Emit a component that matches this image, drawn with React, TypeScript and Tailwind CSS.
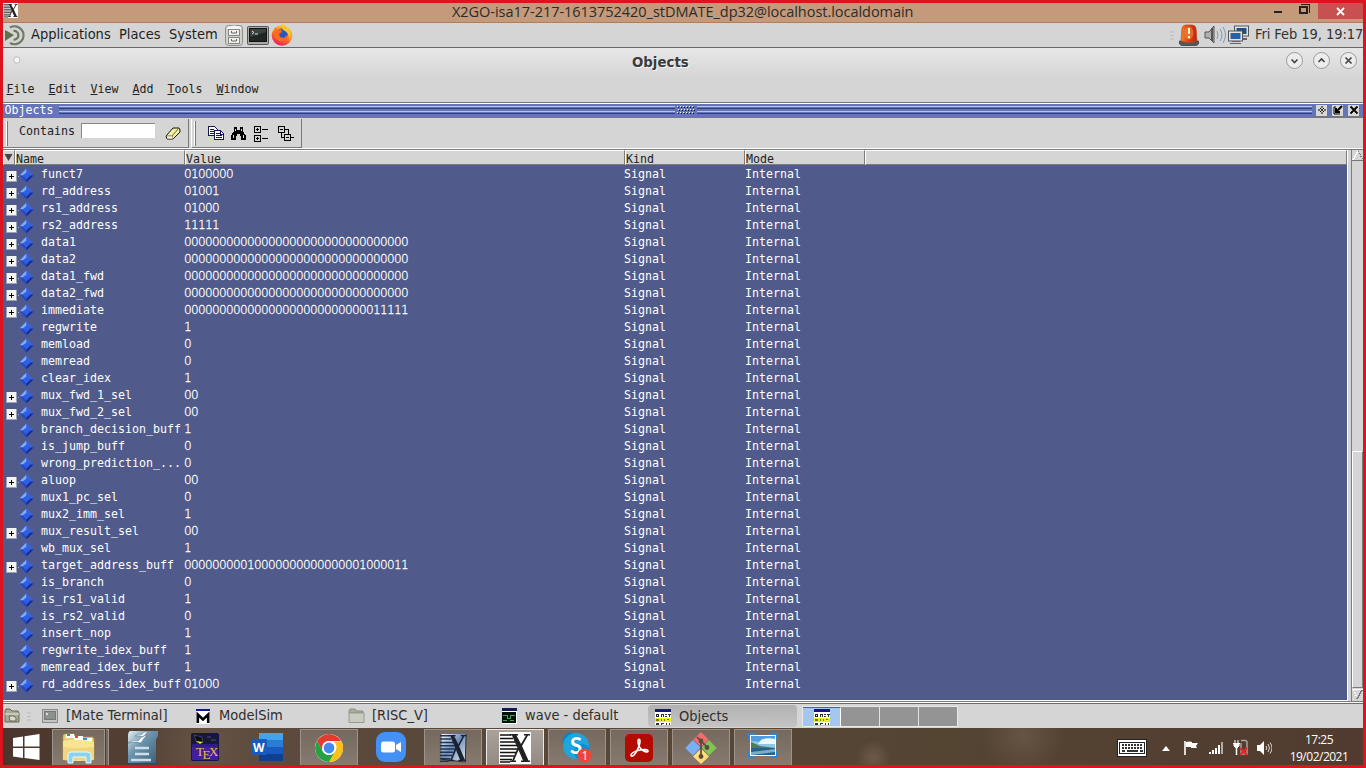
import type { ReactNode } from "react";

const mono = "font-['DejaVu_Sans_Mono','Liberation_Mono',monospace] text-[11.63px] leading-[17px] whitespace-pre";
const ui = "font-['DejaVu_Sans_Condensed','DejaVu_Sans',sans-serif] text-[14.5px] whitespace-pre";

type Signal = { name: string; value: string; group?: boolean };

const zero32 = "00000000000000000000000000000000";
const signals: Signal[] = [
  { name: "funct7", value: "0100000", group: true },
  { name: "rd_address", value: "01001", group: true },
  { name: "rs1_address", value: "01000", group: true },
  { name: "rs2_address", value: "11111", group: true },
  { name: "data1", value: zero32, group: true },
  { name: "data2", value: zero32, group: true },
  { name: "data1_fwd", value: zero32, group: true },
  { name: "data2_fwd", value: zero32, group: true },
  { name: "immediate", value: "00000000000000000000000000011111", group: true },
  { name: "regwrite", value: "1" },
  { name: "memload", value: "0" },
  { name: "memread", value: "0" },
  { name: "clear_idex", value: "1" },
  { name: "mux_fwd_1_sel", value: "00", group: true },
  { name: "mux_fwd_2_sel", value: "00", group: true },
  { name: "branch_decision_buff", value: "1" },
  { name: "is_jump_buff", value: "0" },
  { name: "wrong_prediction_...", value: "0" },
  { name: "aluop", value: "00", group: true },
  { name: "mux1_pc_sel", value: "0" },
  { name: "mux2_imm_sel", value: "1" },
  { name: "mux_result_sel", value: "00", group: true },
  { name: "wb_mux_sel", value: "1" },
  { name: "target_address_buff", value: "00000000010000000000000001000011", group: true },
  { name: "is_branch", value: "0" },
  { name: "is_rs1_valid", value: "1" },
  { name: "is_rs2_valid", value: "0" },
  { name: "insert_nop", value: "1" },
  { name: "regwrite_idex_buff", value: "1" },
  { name: "memread_idex_buff", value: "1" },
  { name: "rd_address_idex_buff", value: "01000", group: true },
];

function XLogo({ w, h, glossy = false }: { w: number; h: number; glossy?: boolean }) {
  return (
    <svg width={w} height={h} viewBox="0 0 32 32" preserveAspectRatio="none">
      <defs>
        <linearGradient id="xg" x1="0" y1="0" x2="1" y2="1">
          <stop offset="0" stopColor="#ffffff" />
          <stop offset="0.45" stopColor="#6d8dbb" />
          <stop offset="1" stopColor="#e6edf5" />
        </linearGradient>
      </defs>
      <path d={glossy ? "M3 1h28l-1 30-27-3z" : "M0 0h32v32H0z"} fill={glossy ? "url(#xg)" : "#fff"} />
      <path
        d="M1 3h11M1 6.500h13M1 10h15M1 13.500h17M1 17h18M1 20.500h16M1 24h14M1 27.500h12M1 30h10"
        stroke={glossy ? "#1f3454" : "#111"}
        strokeWidth="1.600"
      />
      <path d="M11 2h8v1.500h-1.500L22 12l5-8.500h-2V2h6v1.500h-2L23 14l6.500 14.500H31V30h-9v-1.500h2L19.500 18 15 28.500h2V30h-6v-1.500h2L18.500 16 13 3.500h-2z" fill={glossy ? "#1b2230" : "#222"} />
      {glossy && <path d="M3 28l27 3 1-30" fill="none" stroke="#222" />}
    </svg>
  );
}

function Diamond() {
  return (
    <svg width="15" height="15" viewBox="0 0 15 15" className="shrink-0">
      <path d="M7.500.5l7 7-7 7-7-7z" fill="#2f5fe8" />
      <path d="M7.500.5l-7 7h3l4-3z" fill="#82acf4" />
      <path d="M7.500.5l7 7h-3l-4-3z" fill="#3a63d8" />
      <path d="M.5 7.500l7 7v-3l-4-4z" fill="#2b49b8" />
      <path d="M14.500 7.500l-7 7v-3l4-4z" fill="#1a2c8a" />
    </svg>
  );
}

function Plus() {
  return (
    <svg width="11" height="11" viewBox="0 0 11 11" shapeRendering="crispEdges" className="shrink-0">
      <path d="M0 0h11v11H0z" fill="#9aa3bb" />
      <path d="M1 0h9v10H1z" fill="#f4f4f0" />
      <path d="M3 5h5v1H3zM5 3h1v5H5z" fill="#000" />
    </svg>
  );
}

function FirefoxIcon() {
  return (
    <svg width="22" height="22" viewBox="0 0 22 22">
      <defs>
        <linearGradient id="ff" x1="0.8" y1="0" x2="0.3" y2="1">
          <stop offset="0" stopColor="#ffd73a" />
          <stop offset="0.45" stopColor="#ff8a16" />
          <stop offset="1" stopColor="#e81a63" />
        </linearGradient>
      </defs>
      <circle cx="11" cy="11.500" r="10.300" fill="url(#ff)" />
      <circle cx="11" cy="10" r="5.800" fill="#2458c4" />
      <path d="M4 3l2 3 4-1 1 3-3 2 1 3 4 1 3-3c0 5-4 7-7 6-5-1-7-6-5-11z" fill="#ff6a1c" />
      <path d="M10 0c4 0 4 3 7 5 4 5 3 9 1 12 1-5-1-8-4-10-3-1-4-4-4-7z" fill="#ffc62b" />
    </svg>
  );
}

function ObjectsIcon() {
  return (
    <svg width="16" height="16" viewBox="0 0 16 16" shapeRendering="crispEdges">
      <path d="M0 0h16v16H0z" fill="#fff" />
      <path d="M0 0h16v3H0z" fill="#14148a" />
      <path d="M1 5h3v3H1z" fill="#222" />
      <path d="M2 6h1v1H2z" fill="#fff" />
      <path d="M6 5h1v3H6zM7 5h1v1H7zM8 5h1v3H8zM10 5h2v1h-2zM10 7h2v1h-2zM13 5h3v1h-3zM14 6h1v2h-1z" fill="#333" />
      <path d="M0 9h16v4H0z" fill="#ecec22" />
      <path d="M1 10h3v2H1zM6 10h1v2H6zM9 10h1v2H9zM12 10h2v1h-2z" fill="#777716" />
      <path d="M1 14h3v2H1zM6 14h1v2H6zM7 14h2v1H7zM11 14h1v2h-1zM14 14h1v2h-1z" fill="#333" />
    </svg>
  );
}

function FolderSmall() {
  return (
    <svg width="17" height="16" viewBox="0 0 17 16">
      <path d="M1 3l1-2h5l1 2h7v2H1z" fill="#a8ad9c" stroke="#8b8f80" />
      <path d="M1 5h15v9.500H1z" fill="#c9ccc0" stroke="#989c8c" />
    </svg>
  );
}

function TitleBar() {
  return (
    <div className="flex h-5 shrink-0 border-b border-[#ad7f60] bg-[#c49a7a]">
      <div className="h-4 w-[15px]"><XLogo w={15} h={15} /></div>
      <div className="h-[19px] w-[1180px] pl-[434px] font-['Open_Sans','Noto_Sans',sans-serif] text-[14.5px] leading-[18px] tracking-[-0.035px] whitespace-pre text-[#2b2b2b]">
        X2GO-isa17-217-1613752420_stDMATE_dp32@localhost.localdomain
      </div>
      <div className="ml-auto flex h-4">
        <svg width="55" height="16" viewBox="0 0 55 16" shapeRendering="crispEdges">
          <path d="M11 8h8v2h-8z" fill="#222" />
          <path d="M37 4h7v6h-7z" fill="none" stroke="#222" strokeWidth="2" />
          <path d="M38 1.500h8.500v8" fill="none" stroke="#222" />
        </svg>
        <div className="flex w-[45px] items-center justify-center bg-[#c75050]">
          <svg width="9" height="9" viewBox="0 0 9 9"><path d="M1 1l7 7M8 1L1 8" stroke="#fff" strokeWidth="1.800" /></svg>
        </div>
      </div>
    </div>
  );
}

function MatePanel() {
  return (
    <div className={`flex h-[25px] shrink-0 items-center border-b border-[#68686a] bg-[#d5d5d5] text-[#1e1e1e] ${ui}`}>
      <svg width="24" height="24" viewBox="0 0 24 24">
        <path d="M2 7l9 5-9 6z" fill="#5d7248" />
        <path d="M10.500 8a4.300 4.300 0 1 1 0 8.500" fill="none" stroke="#68775c" strokeWidth="2.200" />
        <path d="M7 4.500a9 9 0 1 1 0 15.500" fill="none" stroke="#6f7b67" strokeWidth="2.200" />
      </svg>
      <span className="ml-1 w-[88px]">Applications</span>
      <span className="w-[50px]">Places</span>
      <span className="w-[56px]">System</span>
      <svg width="18" height="22" viewBox="0 0 18 22">
        <rect x=".5" y="1.500" width="17" height="20" rx="3" fill="#d0d0cd" stroke="#8e8e8b" />
        <path d="M2 3q7-3 14 0v2H2z" fill="#f5f5f3" />
        <rect x="3.500" y="5.500" width="11" height="6" fill="#efefec" stroke="#868683" />
        <rect x="3.500" y="13.500" width="11" height="6" fill="#efefec" stroke="#868683" />
        <path d="M6.500 7v2h5V7M6.500 15v2h5v-2" fill="none" stroke="#666" />
      </svg>
      <svg width="22" height="19" viewBox="0 0 22 19" className="ml-1">
        <rect x=".5" y=".5" width="21" height="18" rx="1" fill="#a9aaa5" stroke="#555" />
        <rect x="2.500" y="2.500" width="17" height="13" fill="#1f2624" stroke="#111" />
        <path d="M3 11L19 6V3H3z" fill="#3b4340" />
        <path d="M5 5l2 1.500L5 8M8 8h3" stroke="#ddd" fill="none" />
      </svg>
      <div className="ml-[2px]"><FirefoxIcon /></div>
      <div className="ml-auto flex items-center">
        <svg width="4" height="9" viewBox="0 0 4 9"><path d="M0 1h4M0 4.500h4M0 8h4" stroke="#bbb" /></svg>
        <svg width="22" height="22" viewBox="0 0 22 22" className="ml-[4px]">
          <defs><linearGradient id="al" x1="0" x2="1"><stop offset="0" stopColor="#f0862f" /><stop offset=".45" stopColor="#e2421a" /><stop offset="1" stopColor="#b9260d" /></linearGradient></defs>
          <path d="M1.500 17h19v3l-2 1.500h-15l-2-1.500z" fill="#55565a" stroke="#333" strokeWidth=".7" />
          <path d="M3 17L4 4q1-3 4-3h6q3 0 4 3l1 13q-8 3-16 0z" fill="url(#al)" stroke="#c14a17" strokeWidth=".7" />
          <ellipse cx="11" cy="9" rx="4.500" ry="6.500" fill="#f08a3a" opacity=".6" />
          <path d="M11 4v6M11 12v2.300" stroke="#fff3d0" strokeWidth="2" />
        </svg>
        <svg width="22" height="22" viewBox="0 0 22 22" className="ml-1">
          <path d="M1 8h4l5-6v17l-5-5H1z" fill="#aeb2ac" stroke="#555" />
          <path d="M8 4v13" stroke="#555" strokeWidth="2" />
          <path d="M13 7q2 4 0 8M16 5q4 6 0 12M19 3q5 8 0 16" fill="none" stroke="#8097bd" />
        </svg>
        <svg width="23" height="20" viewBox="0 0 23 20" className="ml-px">
          <rect x="7.500" y="1" width="14" height="10" fill="#e4e4df" stroke="#555" />
          <rect x="9.500" y="3" width="10" height="6" fill="#1f4e8d" />
          <path d="M12 14h8" stroke="#666" strokeWidth="2" />
          <rect x="1.500" y="6" width="14" height="10" fill="#e4e4df" stroke="#555" />
          <rect x="3.500" y="8" width="10" height="6" fill="#2a62a8" />
          <path d="M5 16.500h8M3 18.500h11" stroke="#666" />
        </svg>
        <span className="ml-[5px] w-[108px] tracking-[-0.06px] text-[#333]">Fri Feb 19, 19:17</span>
      </div>
    </div>
  );
}

function RoundButton({ children }: { children: ReactNode }) {
  return (
    <svg width="19" height="19" viewBox="0 0 19 19">
      <circle cx="9.500" cy="9.500" r="8" fill="#ededed" stroke="#9a9a9a" />
      <g fill="none" stroke="#444" strokeWidth="1.700">{children}</g>
    </svg>
  );
}

function WindowTitle() {
  return (
    <div className="flex h-[30px] shrink-0 items-start bg-linear-to-b from-[#e7e7e7] to-[#d5d5d5]">
      <svg width="28" height="24" viewBox="0 0 28 24"><circle cx="13.800" cy="12" r="3.200" fill="#f7f7f7" stroke="#bdbdbd" /></svg>
      <div className="w-[1250px] pl-[601px] pt-[5px] font-['DejaVu_Sans',sans-serif] text-[13.33px] leading-5 font-bold text-[#3b3b3b] [text-shadow:1px_1px_0_#f5f5f5]">Objects</div>
      <div className="ml-auto mr-[5px] flex gap-2 pt-[3px]">
        <RoundButton><path d="M6.500 8.500l3 3 3-3" /></RoundButton>
        <RoundButton><path d="M6.500 11l3-3 3 3" /></RoundButton>
        <RoundButton><path d="M6.500 6.500l6 6M12.500 6.500l-6 6" /></RoundButton>
      </div>
    </div>
  );
}

function Menu() {
  const items: [string, string][] = [["File", "w-[42px]"], ["Edit", "w-[42px]"], ["View", "w-[42px]"], ["Add", "w-[35px]"], ["Tools", "w-[49px]"], ["Window", "w-[49px]"]];
  return (
    <div className={`flex h-6 shrink-0 bg-[#d5d5d5] pt-[3px] pl-[3.5px] text-[#222] ${mono}`}>
      {items.map(([label, w]) => (
        <span key={label} className={w}><span className="underline underline-offset-1">{label[0]}</span>{label.slice(1)}</span>
      ))}
    </div>
  );
}

function Grip() {
  return (
    <div className="flex h-2 flex-1 flex-col">
      <div className="h-px bg-[#b6c0f0]" /><div className="h-px bg-[#6475b8]" /><div className="h-px bg-[#333e70]" />
      <div className="h-[2px]" />
      <div className="h-px bg-[#b6c0f0]" /><div className="h-px bg-[#6475b8]" /><div className="h-px bg-[#333e70]" />
    </div>
  );
}

function DockButton({ children }: { children: ReactNode }) {
  return (
    <div className="flex h-3 w-3 items-center justify-center border-r border-b border-[#777] bg-[#d8d8d8]">
      <svg width="10" height="10" viewBox="0 0 10 10" stroke="#000" fill="none">{children}</svg>
    </div>
  );
}

function DockBar() {
  return (
    <div className="flex h-4 shrink-0 items-center border-t border-b border-t-[#777] border-b-[#777] bg-[#6475b8] shadow-[inset_0_1px_0_#fff]">
      <span className={`w-[56px] pt-px pl-[1.5px] text-white ${mono}`}>Objects</span>
      <Grip />
      <svg width="22" height="9" viewBox="0 0 22 9" shapeRendering="crispEdges">
        {[0, 1, 2, 3, 4, 5].map((i) => (
          <g key={i}>
            <path d={`M${2 + i * 3} 0h1v1h-1zM${3 + i * 3} 3h1v1h-1zM${2 + i * 3} 6h1v1h-1z`} fill="#fff" />
            <path d={`M${3 + i * 3} 1h1v1h-1zM${4 + i * 3} 4h1v1h-1zM${3 + i * 3} 7h1v1h-1z`} fill="#111" />
          </g>
        ))}
      </svg>
      <div className="flex w-[615px]"><Grip /></div>
      <div className="flex w-[51px] gap-1 pt-[1px] pl-1">
        <DockButton><path d="M5 1v2M5 4v2M5 7v2M1 5h2M4 5h2M7 5h2M3 3l1 1M6 6l1 1M7 3L6 4M4 6L3 7" /></DockButton>
        <DockButton><path d="M1 2v7h6M1 2h2" /><path d="M9 1L4 6M3 3v4h4" strokeWidth="2" /></DockButton>
        <DockButton><path d="M1.500 1.500l7 7M8.500 1.500l-7 7" strokeWidth="1.800" /></DockButton>
      </div>
    </div>
  );
}

function ToolBar() {
  return (
    <div className="flex h-[31px] shrink-0 border-b border-white bg-[#d5d5d5] pt-px">
      <div className="flex h-[29px] w-[186px] border-r border-b border-[#7b7b7b] pl-[3px]">
        <div className="mt-[2px] h-[25px] w-[2px] border-l border-l-white border-r border-r-[#777]" />
        <span className={`ml-[11px] mt-[4px] w-[62px] text-[#222] ${mono}`}>Contains</span>
        <div className="mt-[4px] h-[15px] w-[74px] border-t border-l border-[#888] bg-white" />
        <svg width="16" height="14" viewBox="0 0 16 14" className="ml-[10px] mt-[8px]">
          <path d="M1 9L8 1h6l1 2v2l-7 7H2z" fill="#f4f0a0" stroke="#111" />
          <path d="M1 9h6l7-8M7 9l1 3" fill="none" stroke="#665" />
          <path d="M2 9.500h5l1 2H2z" fill="#fffbd9" />
        </svg>
      </div>
      <div className="ml-[2px] flex h-[29px] w-[111px] border-l border-r border-b border-[#7b7b7b] border-l-white pl-[2px]">
        <div className="mt-[2px] h-[25px] w-[2px] border-l border-l-white border-r border-r-[#777]" />
        <svg width="87" height="18" viewBox="0 0 87 18" className="ml-[12px] mt-[6px]" fill="none" stroke="#000" shapeRendering="crispEdges">
          <g stroke="#17174f"><path d="M.5 1.500h6l3 3v6h-9z" fill="#fff" /><path d="M6.500 5.500h6l3 3v6h-9z" fill="#fff" /><path d="M2 4.500h4M2 6.500h4M2 8.500h4M8 8.500h4M8 10.500h6M8 12.500h6M12.500 5v4h3" /></g>
          <path d="M26 2h3v3h3V2h3v4l3 5v4h-5v-4h-1v-2h-3v2h-1v4h-5v-4l3-5z" fill="#000" stroke="none" />
          <path d="M27.500 4v2M33.500 4v2M25.500 10v3M35.500 10v3" stroke="#ddd" />
          <g strokeWidth="1"><path d="M46.500 1.500h6v6h-6zM46.500 10.500h6v6h-6zM48 4.500h3M49.500 3v3M48 13.500h3M49.500 12v3M54 4.500h6M54 13.500h6" /></g>
          <path d="M70.500 1.500h6v6h-6zM76.500 9.500h6v6h-6zM72 4.500h3M78 12.500h3M77 4.500h3v5M73.500 8v4.500h3M83 12.500h3" />
        </svg>
      </div>
    </div>
  );
}

function HeaderCell({ w, children }: { w: string; children?: ReactNode }) {
  return <div className={`h-[15px] border-t border-l border-t-white border-l-white border-r border-b border-r-[#7b7b7b] border-b-[#7b7b7b] bg-[#d5d5d5] text-[#222] ${w} ${mono} leading-[14px]`}>{children}</div>;
}

function SignalRow({ s }: { s: Signal }) {
  return (
    <div className={`flex h-[17px] text-white ${mono}`}>
      <div className="flex w-[38px] pt-[3px] pl-[3px]">
        <div className="w-[11px] pt-[3px]">{s.group && <Plus />}</div>
        <span className="mt-2 ml-px h-px w-px">{s.group && <span className="block h-px w-px bg-[#aeb6d4]" />}</span>
        <Diamond />
      </div>
      <span className="w-[143px] pt-px">{s.name}</span>
      <span className="w-[440px] pt-px font-['DejaVu_Sans_Light','DejaVu_Sans',sans-serif] text-[12px] tracking-[-0.635px] [-webkit-text-stroke:0.3px_white]">{s.value}</span>
      <span className="w-[121px] pt-px">Signal</span>
      <span className="pt-px">Internal</span>
    </div>
  );
}

function Table() {
  return (
    <div className="flex h-[552px] shrink-0 border-t border-[#7b7b7b] bg-[#d5d5d5]">
      <div className="flex w-[1345px] flex-col border-r border-b border-white bg-[#505a8b]">
        <div className="flex">
          <HeaderCell w="w-[12px]"><svg width="10" height="12" viewBox="0 0 10 12"><path d="M.5 3h8l-4 7z" fill="#444" /></svg></HeaderCell>
          <HeaderCell w="w-[170px]">Name</HeaderCell>
          <HeaderCell w="w-[440px]">Value</HeaderCell>
          <HeaderCell w="w-[120px]">Kind</HeaderCell>
          <HeaderCell w="w-[120px]">Mode</HeaderCell>
          <HeaderCell w="w-[482px]" />
        </div>
        {signals.map((s) => <SignalRow key={s.name} s={s} />)}
      </div>
      <div className="ml-[3px] flex w-3 flex-col border-l border-[#7b7b7b]">
        <svg width="11" height="11" viewBox="0 0 11 11" shapeRendering="crispEdges"><path d="M0 10.500h11" stroke="#777" /><path d="M1 10L6 1" stroke="#fff" strokeWidth="1.500" /><path d="M6 1l5 9" stroke="#777" strokeDasharray="1 1" /></svg>
        <div className="h-[290px]" />
        <div className="h-[237px] border-t border-l border-r border-b border-t-white border-l-white border-r-[#7b7b7b] border-b-[#7b7b7b]" />
        <svg width="11" height="13" viewBox="0 0 11 13" shapeRendering="crispEdges"><path d="M0 1h11" stroke="#fff" /><path d="M1 2l5 9" stroke="#fff" strokeDasharray="1 1" /><path d="M10 2L5 11" stroke="#777" strokeWidth="1.500" /></svg>
      </div>
    </div>
  );
}

function BottomPanel() {
  return (
    <div className={`flex h-[27px] shrink-0 border-t border-[#7b7b7b] bg-white pt-px text-[#2e2e2e] ${ui} leading-[23px]`}>
      <div className="flex w-full items-center border-t border-[#6b6b6b] bg-[#d5d5d5]">
        <div className="ml-px"><svg width="16" height="16" viewBox="0 0 16 16"><path d="M1 3l1-2h4l2 2h6l1 2v9H1z" fill="#a7ab94" stroke="#65695a" /><path d="M1 6h14" stroke="#e8e9e1" /><path d="M5 8h5l2 2v3H6z" fill="#d9dbcf" stroke="#65695a" /></svg></div>
        <svg width="4" height="9" viewBox="0 0 4 9" className="ml-[7px]"><path d="M0 1h4M0 4.500h4M0 8h4" stroke="#bbb" /></svg>
        <svg width="16" height="14" viewBox="0 0 16 14" className="ml-[11px]"><rect x=".5" y=".5" width="15" height="13" fill="#c5c5c2" stroke="#8b8b8b" /><rect x="2.500" y="2.500" width="11" height="8" fill="#8d918e" stroke="#777" /><path d="M4 4l2 1-2 1" stroke="#eee" fill="none" /></svg>
        <span className="-mt-px ml-2 w-[130px]">[Mate Terminal]</span>
        <svg width="14" height="15" viewBox="0 0 14 15"><path d="M0 0h14v2H0z" fill="#16169c" /><path d="M0 2h14v13H0z" fill="#fff" /><path d="M1.800 14V5.500L7 10.500l5.200-5V14" fill="none" stroke="#000" strokeWidth="2.600" /></svg>
        <span className="-mt-px ml-[9px] w-[129px]">ModelSim</span>
        <FolderSmall />
        <span className="-mt-px ml-[7px] w-[130px]">[RISC_V]</span>
        <svg width="15" height="16" viewBox="0 0 15 16" shapeRendering="crispEdges"><path d="M0 0h15v16H0z" fill="#fff" /><path d="M0 0h15v3H0z" fill="#17175b" /><path d="M0 4h14v11H0z" fill="#061007" /><path d="M1 7.500h4v3h3v-3h5M1 12.500h4M8 12.500h4" stroke="#38a560" fill="none" /></svg>
        <span className="-mt-px ml-2 w-[123px]">wave - default</span>
        <div className="flex h-[22px] w-[149px] items-center rounded-sm bg-linear-to-b from-[#b2b2b2] to-[#c4c4c4] pt-px pl-[7px]">
          <ObjectsIcon /><span className="ml-2">Objects</span>
        </div>
        <div className="ml-[5px] flex h-[21px] border border-[#e9e9e9]">
          <div className="flex w-[38px] items-center justify-center border-t border-r border-t-[#44688f] border-r-white bg-[#a3c7ee]"><ObjectsIcon /></div>
          <div className="w-[39px] border-r border-[#e2e2e2] bg-[#949494]" />
          <div className="w-[39px] border-r border-[#e2e2e2] bg-[#949494]" />
          <div className="w-[38px] bg-[#949494]" />
        </div>
      </div>
    </div>
  );
}

function Task({ w, state = "idle", children }: { w: string; state?: "idle" | "open" | "active"; children: ReactNode }) {
  const look = state === "active"
    ? "border border-b-0 border-[#eceae8] bg-linear-to-b from-[#aaa19b] to-[#938a83]"
    : state === "open"
      ? "border border-b-0 border-[#9c938c] bg-linear-to-b from-[#75695f] to-[#877a6f]"
      : "";
  return <div className={`flex h-[36px] shrink-0 items-center justify-center ${w} ${look}`}>{children}</div>;
}

function TaskBar() {
  return (
    <div className="flex h-[37px] shrink-0 items-end overflow-hidden bg-[#544537] bg-[radial-gradient(circle_at_64%_80%,#6c5a49_0,transparent_2%),radial-gradient(circle_at_75%_20%,#665444_0,transparent_4%),radial-gradient(circle_at_15%_50%,#665446_0,transparent_6%),linear-gradient(90deg,#4b352c,#5b4a3d_20%,#544432_70%,#513b30)]">
      <Task w="w-[45px]">
        <svg width="28" height="26" viewBox="0 0 28 26" className="mb-px"><path d="M1 4l10-1.500v10H1zM12.500 2.300L27.500 0v12.500h-15zM1 14h10v10L1 22.500zM12.500 14h15v12l-15-2z" fill="#fff" /></svg>
      </Task>
      <Task w="ml-[4px] w-[53px]" state="open">
        <svg width="33" height="32" viewBox="0 0 33 32">
          <path d="M1 4q0-2 2-2h9l2 3h16q2 0 2 2v20H1z" fill="#e9cd70" stroke="#b39440" strokeWidth=".7" />
          <path d="M4 2h8v4H4z" fill="#fff" /><path d="M5 2h3v2H5z" fill="#23a845" /><path d="M12 4h9v4h-9z" fill="#fff" /><path d="M13 4h3v2h-3z" fill="#e34d2f" /><path d="M20 6h10v4H20z" fill="#fff" /><path d="M21 6h4v2h-4z" fill="#2d93d9" />
          <path d="M1 9q15-3 31 1v18q-16 2-31 0z" fill="#f7e594" />
          <path d="M1 15q15 2 31 0v13H1z" fill="#ebcc70" opacity=".65" />
          <path d="M6 31V23q0-3 3-3h16q4 0 4 3v8h-5v-6H11v6z" fill="#8bd3ec" stroke="#eaf9ff" />
        </svg>
      </Task>
      <div className="ml-px h-[36px] w-[3px] shrink-0 border-t border-r border-[#9c938c] bg-[#75695f]" />
      <Task w="ml-[4px] w-[58px]">
        <svg width="33" height="32" viewBox="0 0 33 32">
          <defs><linearGradient id="oo" x1="0" y1="0" x2="1" y2="1"><stop offset="0" stopColor="#e9f1f6" /><stop offset=".4" stopColor="#6e96ae" /><stop offset="1" stopColor="#355e77" /></linearGradient></defs>
          <path d="M4 0h28v5q-2 2-2 6v21H2V5q0-4 2-5z" fill="url(#oo)" />
          <path d="M2 12q6-4 10-2 4-6 9-6-4 4-6 8-7-2-13 0zM9 5q4-3 6-1 3-4 7-3-3 2-5 5-4-2-8-1z" fill="#fff" stroke="#356" strokeWidth=".4" />
          <path d="M9 17h14M9 23h14M5 29h20" stroke="#cfdde5" strokeWidth="2.500" />
        </svg>
      </Task>
      <Task w="ml-[4px] w-[60px]">
        <svg width="28" height="28" viewBox="0 0 28 28">
          <rect x=".5" y=".5" width="27" height="27" rx="1" fill="#2d1d8c" stroke="#171052" />
          <path d="M1 1h26v10H1z" fill="#171736" /><path d="M3 2l8 2 1 5-6 1z" fill="#0b0b0b" stroke="#56629e" strokeWidth=".6" /><path d="M16 4h4M20 7h5" stroke="#56629e" strokeWidth=".8" />
          <path d="M5 8l7 1-3 2z" fill="#e9e22f" />
          <path d="M1 14h26v13H1z" fill="#41209b" />
          <g fill="#f0b94e" className="font-['Liberation_Serif',serif] text-[13px]"><text x="5" y="23">T</text><text x="11.500" y="26">E</text><text x="18" y="23">X</text></g>
        </svg>
      </Task>
      <Task w="ml-[2px] w-[60px]">
        <svg width="32" height="28" viewBox="0 0 32 28">
          <path d="M8 0h24v7H8z" fill="#41a5ee" /><path d="M8 7h24v7H8z" fill="#2b7cd3" /><path d="M8 14h24v7H8z" fill="#185abd" /><path d="M8 21h24v7H8z" fill="#103f91" />
          <rect y="6" width="16" height="16" rx="1" fill="#185abd" />
          <text x="2" y="18.500" fill="#fff" className="font-['Open_Sans',sans-serif] text-[12px] font-bold">W</text>
        </svg>
      </Task>
      <Task w="ml-[3px] w-[58px]" state="open">
        <svg width="30" height="30" viewBox="0 0 30 30">
          <circle cx="15" cy="15" r="14" fill="#fff" />
          <path d="M2.900 8A14 14 0 0 1 27.100 8H15a7 7 0 0 0-6.100 3.500L8.500 18z" fill="#e33b2e" />
          <path d="M27.500 8.500A14 14 0 0 1 15 29l6-10.500A7 7 0 0 0 19.500 8.500z" fill="#fbc116" />
          <path d="M2.900 8A14 14 0 0 0 15 29l6-10.500A7 7 0 0 1 9 18.500z" fill="#27a243" />
          <circle cx="15" cy="15" r="7" fill="#fff" /><circle cx="15" cy="15" r="5.400" fill="#4588ee" />
        </svg>
      </Task>
      <Task w="ml-[4px] w-[58px]">
        <svg width="30" height="30" viewBox="0 0 30 30"><rect width="30" height="30" rx="9" fill="#4390f7" /><rect x="5" y="9.500" width="14" height="11" rx="2.500" fill="#fff" /><path d="M20 13l5-3v10l-5-3z" fill="#fff" /></svg>
      </Task>
      <Task w="ml-[4px] w-[58px]" state="open"><XLogo w={28} h={30} glossy /></Task>
      <Task w="ml-[4px] w-[58px]" state="active"><XLogo w={32} h={32} /></Task>
      <Task w="ml-[4px] w-[58px]" state="open">
        <svg width="30" height="31" viewBox="0 0 30 31">
          <circle cx="9" cy="9" r="8.500" fill="#0d83bd" /><circle cx="14" cy="14" r="13" fill="#1ea5df" /><circle cx="20" cy="20" r="8" fill="#0a8fd0" />
          <text x="8" y="22" fill="#fff" className="font-['Lato',sans-serif] text-[22px] font-bold">S</text>
          <circle cx="22.500" cy="23.500" r="7" fill="#f04438" />
          <text x="19.500" y="28" fill="#fff" className="font-['Open_Sans',sans-serif] text-[12px]">1</text>
        </svg>
      </Task>
      <Task w="ml-[4px] w-[58px]" state="open">
        <svg width="28" height="28" viewBox="0 0 28 28"><rect width="28" height="28" rx="5" fill="#b30b00" /><path d="M6 21c0-2 5-4 9-5 4-.8 8-.5 8 1s-3 1-5-.5c-3-2-5-6-5-9s2-3 2 0c0 4-5 14-7.500 14.500C6.500 22.300 6 22 6 21z" fill="none" stroke="#fff" strokeWidth="1.600" /></svg>
      </Task>
      <Task w="ml-[4px] w-[58px]" state="open">
        <svg width="32" height="32" viewBox="0 0 32 32">
          <path d="M16 0l7.500 7.500L16 15 8.500 7.500z" fill="#f46c6c" /><path d="M8 8l7.500 7.500L8 23.500.2 16z" fill="#79b0f5" /><path d="M24 8l7.800 8-7.800 7.500-7.500-8z" fill="#80c454" /><path d="M16 16.500l8 8-8 7.500-8-7.500z" fill="#ffdd77" />
          <path d="M12 5l4 4v15M16 9l6 6" fill="none" stroke="#5b4b40" strokeWidth="1.700" /><circle cx="16" cy="9" r="2.400" fill="#5b4b40" /><circle cx="22" cy="15.500" r="2.400" fill="#5b4b40" /><circle cx="16" cy="24.500" r="2.400" fill="#5b4b40" />
        </svg>
      </Task>
      <Task w="ml-[4px] w-[58px]" state="open">
        <svg width="30" height="25" viewBox="0 0 30 25" className="mb-1">
          <path d="M.5 7V.5H8M22 .5h7.500V7M29.500 18v6.500H22M8 24.500H.5V18" fill="none" stroke="#3484c7" strokeWidth="3" />
          <rect x="2.500" y="2.500" width="25" height="20" fill="#8fc7ec" stroke="#fff" />
          <path d="M3 3h24v7L3 8z" fill="#4e9de0" /><path d="M13 7q6-3 14-1v5H10z" fill="#edf6f9" /><path d="M3 9l9 4 15 2v2H3z" fill="#4c7d4d" /><path d="M3 15h24v7H3z" fill="#27628b" /><path d="M3 19l24-3v3L3 22z" fill="#7cadc9" />
        </svg>
      </Task>
      <div className="ml-auto flex h-[37px] items-center text-white">
        <svg width="30" height="18" viewBox="0 0 30 18" shapeRendering="crispEdges" className="mt-[2px]"><path d="M0 0h30v18H0z" fill="#222" /><path d="M1 1h28v16H1z" fill="#fff" /><path d="M2.500 3.500h25v11h-25z" fill="none" stroke="#222" /><path d="M5 6h20M5 9h20" stroke="#333" strokeDasharray="2 1" strokeWidth="2" /><path d="M5 12h3M10 12h11M23 12h3" stroke="#333" strokeWidth="2" /></svg>
        <svg width="8" height="5" viewBox="0 0 8 5" className="mt-[3px] ml-[15px]"><path d="M4 0l4 5H0z" fill="#fff" /></svg>
        <svg width="16" height="16" viewBox="0 0 16 16" className="mt-[2px] ml-[13px]"><path d="M2 1v14" stroke="#fff" strokeWidth="1.600" /><path d="M3 2q4-1 6 0v1h6l-2 3 1 2H8V7H3z" fill="#fff" /></svg>
        <svg width="16" height="14" viewBox="0 0 16 14" className="mt-[3px] ml-[9px]" fill="#fff"><path d="M1 11h2v2H1zM4 9h2v4H4zM7 7h2v6H7zM10 4h2v9h-2z" /><path d="M13 1h2v12h-2z" fill="#b2aaa4" /></svg>
        <svg width="16" height="17" viewBox="0 0 16 17" className="mt-[2px] ml-[8px]"><path d="M3 1v4M6 1v4M1 4.500h7M2 5v2l2 2h1l2-2V5z" stroke="#fff" fill="#fff" /><path d="M4.500 8v8" stroke="#fff" strokeWidth="1.500" /><path d="M9 1.500h4q2 0 2 2V15H9V4" fill="none" stroke="#aaa29d" strokeWidth="1.500" /><path d="M8 9l7 7M15 9l-7 7" stroke="#e82828" strokeWidth="2.200" /></svg>
        <svg width="16" height="16" viewBox="0 0 16 16" className="mt-[3px] ml-[8px]"><path d="M1 5h3l4-4v14l-4-4H1z" fill="#fff" /><path d="M10 6q1.500 2 0 4M12 4q3 4 0 8M14 2.500q4 5.500 0 11" fill="none" stroke="#ddd" /></svg>
        <div className="ml-[12px] flex w-[70px] flex-col items-center pt-[3px] font-['Open_Sans','Noto_Sans',sans-serif] text-[12px] leading-[17px] tracking-[-0.5px]"><span>17:25</span><span>19/02/2021</span></div>
        <div className="w-[9px]" />
      </div>
    </div>
  );
}

export default function App() {
  return (
    <div className="flex h-[768px] w-[1366px] flex-col overflow-hidden border-[3px] border-[#dc1420] bg-[#d5d5d5]">
      <TitleBar />
      <MatePanel />
      <WindowTitle />
      <Menu />
      <DockBar />
      <ToolBar />
      <Table />
      <BottomPanel />
      <TaskBar />
    </div>
  );
}
